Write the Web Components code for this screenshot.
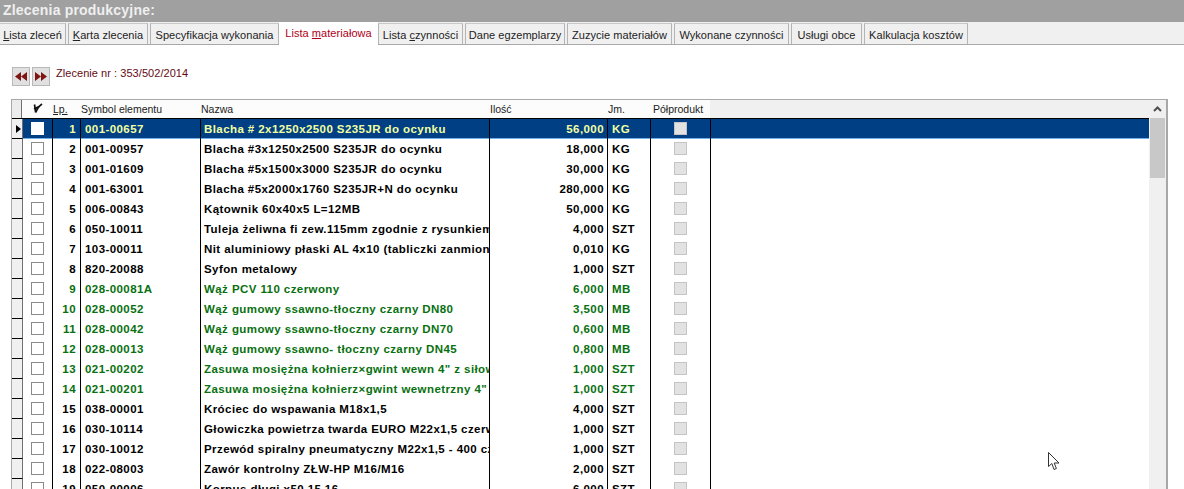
<!DOCTYPE html>
<html lang="pl">
<head>
<meta charset="utf-8">
<title>Zlecenia produkcyjne</title>
<style>
	html, body { margin: 0; height: 489px; overflow: hidden; background: #fff; }
	body { display: flex; flex-direction: column; font-family: "Liberation Sans", Arial, sans-serif; font-size: 11px; }
	u { text-underline-offset: 1px; }
</style>
</head>
<body>

<template id="title-bar">
	<style>
		:host { display: block; height: 23px; background: #a0a0a0; color: #efefef; font: bold 14px/21px "Liberation Sans", Arial, sans-serif; letter-spacing: .2px; padding-left: 3px; box-sizing: border-box; }
	</style>
	<slot></slot>
</template>

<template id="tab-bar">
	<style>
		:host { display: flex; height: 23px; padding-top: 1px; gap: 2px; box-sizing: border-box; background: #f0f0f0; border-bottom: 1px solid #a8a8a8; }
	</style>
	<slot></slot>
</template>

<template id="tab-item">
	<style>
		:host { display: block; box-sizing: border-box; height: 21px; background: #f0f0f0; border: 1px solid #b4b4b4; border-bottom: 0; border-top-color: #c8c8c8; color: #222; font: 11px/23px "Liberation Sans", Arial, sans-serif; text-align: center; white-space: nowrap; letter-spacing: .05px; }
		:host([active]) { background: #fff; color: #b00018; border: 0; height: 23px; margin: -1px -2px 0 -2px; line-height: 23px; z-index: 1; }
		:host(:first-child) { border-left: 0; }
	</style>
	<slot></slot>
</template>

<template id="order-nav">
	<style>
		:host { display: flex; align-items: flex-start; gap: 2px; height: 20px; margin: 22px 0 0 12px; }
		.btn { width: 18px; height: 19px; box-sizing: border-box; background: #e0e0e0; border: 1px solid #b8b8b8; display: flex; align-items: center; justify-content: center; }
		svg { width: 12px; height: 9px; fill: #7e1414; }
		.label { margin: 0 0 0 4px; color: #650a14; font: 11px/13px "Liberation Sans", Arial, sans-serif; letter-spacing: .05px; }
	</style>
	<div class="btn"><svg viewBox="0 0 12 9"><path d="M6 0v9L0 4.500zM12 0v9L6 4.500z"/></svg></div>
	<div class="btn"><svg viewBox="0 0 12 9"><path d="M0 0v9l6-4.500zM6 0v9l6-4.500z"/></svg></div>
	<div class="label"><slot></slot></div>
</template>

<template id="grid-row">
	<style>
		:host { display: grid; grid-template-columns: 11px 30px 28px 120px 289px 118px 43px 60px 1fr; height: 20px; box-sizing: border-box; color: #000; font: bold 11.5px/20px "Liberation Sans", Arial, sans-serif; letter-spacing: .42px; }
		:host([tone="green"]) { color: #087010; }
		:host([selected]) { background: #003f84; color: #f2ffa0; box-shadow: inset 0 -1px #6fb0e6; }
		.c { border-right: 1px solid #000; overflow: hidden; white-space: nowrap; box-sizing: border-box; }
		.ind { background: #f0f0f0; border-bottom: 1px solid #000; border-right: 1px solid #707070; position: relative; }
		:host([selected]) .ind::after { content: ""; position: absolute; left: 4px; top: 6px; border-left: 5px solid #000; border-top: 4px solid transparent; border-bottom: 4px solid transparent; }
		.num { text-align: right; padding-right: 4px; }
		.sym { padding-left: 4px; }
		.name { padding-left: 3px; }
		.qty { text-align: right; padding-right: 3px; }
		.unit { padding-left: 4px; }
		.box { display: flex; align-items: center; justify-content: center; }
		.check { padding-right: 1px; }
		.check i { display: block; width: 13px; height: 13px; box-sizing: border-box; border: 1px solid #8a8a8a; background: #fff; }
		:host([selected]) .check i { border-color: #fff; }
		.half i { display: block; width: 13px; height: 13px; box-sizing: border-box; border: 1px solid #c4c4c4; background: #e2e2e2; }
		.tail { border: 0; }
	</style>
	<div class="ind"></div>
	<div class="c box check"><i></i></div>
	<div class="c num"></div>
	<div class="c sym"></div>
	<div class="c name"></div>
	<div class="c qty"></div>
	<div class="c unit"></div>
	<div class="c box half"><i></i></div>
	<div class="tail"></div>
</template>

<template id="data-grid">
	<style>
		:host { display: flex; margin: 12px 16px 0 11px; height: 400px; box-sizing: border-box; border-top: 1px solid #a8a8a8; border-left: 1px solid #a8a8a8; border-right: 2px solid #a8a8a8; overflow: hidden; }
		.main { flex: 1; min-width: 0; }
		.head { display: grid; grid-template-columns: 10px 30px 28px 120px 289px 118px 43px 60px 1fr; height: 19px; box-sizing: border-box; border-bottom: 1px solid #000; font: 10.5px/18px "Liberation Sans", Arial, sans-serif; color: #222; }
		.head div { background: #fcfcfc; padding-left: 1px; white-space: nowrap; overflow: hidden; }
		.head .ind { background: #ececec; padding: 0; border-right: 1px solid #707070; }
		.head .chk { display: flex; align-items: center; justify-content: center; }
		.head .chk svg { width: 11px; height: 11px; }
		.head .lp { text-decoration: underline; }
		.head .half { padding-left: 3px; }
		.head .rest { background: #f0f0f0; }
		.bar { width: 17px; background: #f0f0f0; display: flex; flex-direction: column; flex: none; }
		.up { height: 18px; display: flex; align-items: center; justify-content: center; }
		.up svg { width: 9px; height: 6px; fill: none; stroke: #505050; stroke-width: 2; }
		.thumb { height: 60px; background: #c8c8c8; margin: 0 1px; }
	</style>
	<div class="main">
		<div class="head">
			<div class="ind"></div>
			<div class="chk"><svg viewBox="0 0 11 11"><path d="M2.500 1.500l1.200 8M3.700 9.500C5 6 7 3 10 1M2 6l5-2.500" fill="none" stroke="#111" stroke-width="1.700"/></svg></div>
			<div class="lp">Lp.</div>
			<div>Symbol elementu</div>
			<div>Nazwa</div>
			<div>Ilość</div>
			<div>Jm.</div>
			<div class="half">Półprodukt</div>
			<div class="rest"></div>
		</div>
		<slot></slot>
	</div>
	<div class="bar">
		<div class="up"><svg viewBox="0 0 9 6"><path d="M1 5l3.500-3.500L8 5"/></svg></div>
		<div class="thumb"></div>
	</div>
</template>

<template id="mouse-cursor">
	<style>
		:host { position: absolute; left: 1048px; top: 452px; width: 12px; height: 19px; }
		svg { display: block; width: 12px; height: 19px; }
	</style>
	<svg viewBox="0 0 12 19"><path d="M.5.500v14l3.300-3 2.200 6 2.400-1-2.200-5.500h4.800z" fill="#fff" stroke="#333" stroke-width="1"/></svg>
</template>

<title-bar>Zlecenia produkcyjne:</title-bar>

<tab-bar>
	<tab-item style="width:66px"><u>L</u>ista zleceń</tab-item>
	<tab-item style="width:80px"><u>K</u>arta zlecenia</tab-item>
	<tab-item style="width:129px">Specyfikacja wykonania</tab-item>
	<tab-item active style="width:99px">Lista <u>m</u>ateriałowa</tab-item>
	<tab-item style="width:85px">Lista <u>c</u>zynności</tab-item>
	<tab-item style="width:100px">Dane egzemplarzy</tab-item>
	<tab-item style="width:105px">Zuzycie materiałów</tab-item>
	<tab-item style="width:115px">Wykonane czynności</tab-item>
	<tab-item style="width:71px">Usługi obce</tab-item>
	<tab-item style="width:104px">Kalkulacja kosztów</tab-item>
</tab-bar>

<order-nav>Zlecenie nr : 353/502/2014</order-nav>

<data-grid id="grid"></data-grid>

<mouse-cursor></mouse-cursor>

<script>
// every element here is just its template cloned into an open shadow root
function plain(name) {
	customElements.define(name, class extends HTMLElement {
		constructor() {
			super();
			const clone = document.getElementById(name).content.cloneNode(true);
			this.attachShadow({mode: 'open'}).appendChild(clone);
		}
	});
}
['title-bar', 'tab-bar', 'tab-item', 'order-nav', 'data-grid', 'mouse-cursor'].forEach(plain);

class GridRow extends HTMLElement {
	constructor() {
		super();
		const clone = document.getElementById('grid-row').content.cloneNode(true);
		this.attachShadow({mode: 'open'}).appendChild(clone);
	}
	set data(d) {
		const root = this.shadowRoot;
		root.querySelector('.num').textContent = d[0];
		root.querySelector('.sym').textContent = d[1];
		root.querySelector('.name').textContent = d[2];
		root.querySelector('.qty').textContent = d[3];
		root.querySelector('.unit').textContent = d[4];
	}
}
customElements.define('grid-row', GridRow);

const rows = [
	['1', '001-00657', 'Blacha # 2x1250x2500 S235JR do ocynku', '56,000', 'KG'],
	['2', '001-00957', 'Blacha #3x1250x2500 S235JR do ocynku', '18,000', 'KG'],
	['3', '001-01609', 'Blacha #5x1500x3000 S235JR do ocynku', '30,000', 'KG'],
	['4', '001-63001', 'Blacha #5x2000x1760 S235JR+N do ocynku', '280,000', 'KG'],
	['5', '006-00843', 'Kątownik 60x40x5 L=12MB', '50,000', 'KG'],
	['6', '050-10011', 'Tuleja żeliwna fi zew.115mm zgodnie z rysunkiem', '4,000', 'SZT'],
	['7', '103-00011', 'Nit aluminiowy płaski AL 4x10 (tabliczki zanmionowe)', '0,010', 'KG'],
	['8', '820-20088', 'Syfon metalowy', '1,000', 'SZT'],
	['9', '028-00081A', 'Wąż PCV 110 czerwony', '6,000', 'MB', 'green'],
	['10', '028-00052', 'Wąż gumowy ssawno-tłoczny czarny DN80', '3,500', 'MB', 'green'],
	['11', '028-00042', 'Wąż gumowy ssawno-tłoczny czarny DN70', '0,600', 'MB', 'green'],
	['12', '028-00013', 'Wąż gumowy ssawno- tłoczny czarny DN45', '0,800', 'MB', 'green'],
	['13', '021-00202', 'Zasuwa mosiężna kołnierz×gwint wewn 4" z siłownikiem', '1,000', 'SZT', 'green'],
	['14', '021-00201', 'Zasuwa mosiężna kołnierz×gwint wewnetrzny 4"', '1,000', 'SZT', 'green'],
	['15', '038-00001', 'Króciec do wspawania M18x1,5', '4,000', 'SZT'],
	['16', '030-10114', 'Głowiczka powietrza twarda EURO M22x1,5 czerwona', '1,000', 'SZT'],
	['17', '030-10012', 'Przewód spiralny pneumatyczny M22x1,5 - 400 czerwony', '1,000', 'SZT'],
	['18', '022-08003', 'Zawór kontrolny ZŁW-HP M16/M16', '2,000', 'SZT'],
	['19', '050-00006', 'Korpus długi x50.15.16', '6,000', 'SZT']
];
const grid = document.getElementById('grid');
rows.forEach((d, i) => {
	const row = document.createElement('grid-row');
	row.data = d;
	if (d[5]) row.setAttribute('tone', d[5]);
	if (i === 0) row.setAttribute('selected', '');
	grid.appendChild(row);
});
</script>
</body>
</html>
